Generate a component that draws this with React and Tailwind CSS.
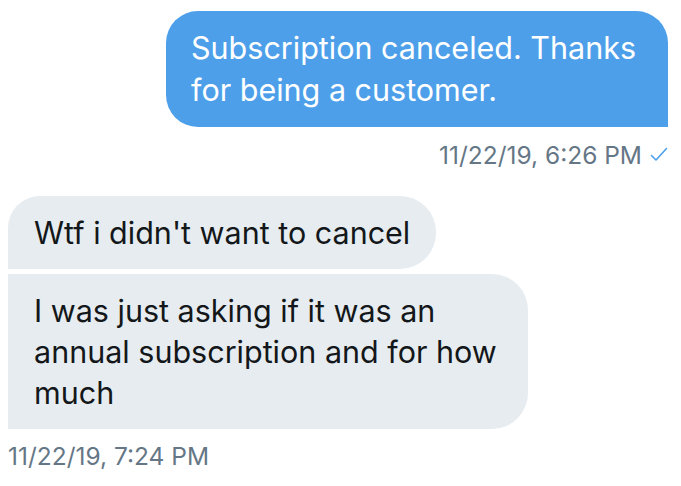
export default function App() {
    return (
        <div className="w-[681px] h-[486px] bg-white overflow-hidden" style={{ fontFamily: 'Inter, "Liberation Sans", Arial, sans-serif' }}>
            <div className="flex flex-col items-end pr-[13px] pt-[11px]">
                <div className="w-[502px] bg-[#4d9fea] text-white text-[30.5px] leading-[42px] pl-[25px] pr-[18px] py-[16px] rounded-tl-[32px] rounded-tr-[32px] rounded-bl-[32px]">
                    Subscription canceled. Thanks for being a customer.
                </div>
                <div className="flex items-center gap-[8px] mt-[14px] text-[24.5px] leading-[28px] text-[#657786]">
                    <span>11/22/19, 6:26 PM</span>
                    <svg width="18" height="16" viewBox="0 0 18 16" fill="none">
                        <path d="M1.5 8.5 L6 13 L16.5 1.5" stroke="#4d9fea" strokeWidth="1.6" strokeLinecap="round" strokeLinejoin="round" />
                    </svg>
                </div>
            </div>

            <div className="flex flex-col items-start pl-[8px] mt-[27px]">
                <div className="bg-[#e6ecf0] text-[#14171a] text-[30.5px] leading-[41px] pl-[26px] pr-[26px] py-[16px] rounded-tl-[32px] rounded-tr-[36px] rounded-br-[36px]">
                    Wtf i didn't want to cancel
                </div>
                <div className="w-[520px] mt-[5px] bg-[#e6ecf0] text-[#14171a] text-[30.5px] leading-[41px] pl-[26px] pr-[26px] py-[16px] rounded-tr-[36px] rounded-br-[36px]">
                    I was just asking if it was an annual subscription and for how much
                </div>
                <div className="mt-[13px] text-[24.5px] leading-[28px] text-[#657786]">11/22/19, 7:24 PM</div>
            </div>
        </div>
    )
}
